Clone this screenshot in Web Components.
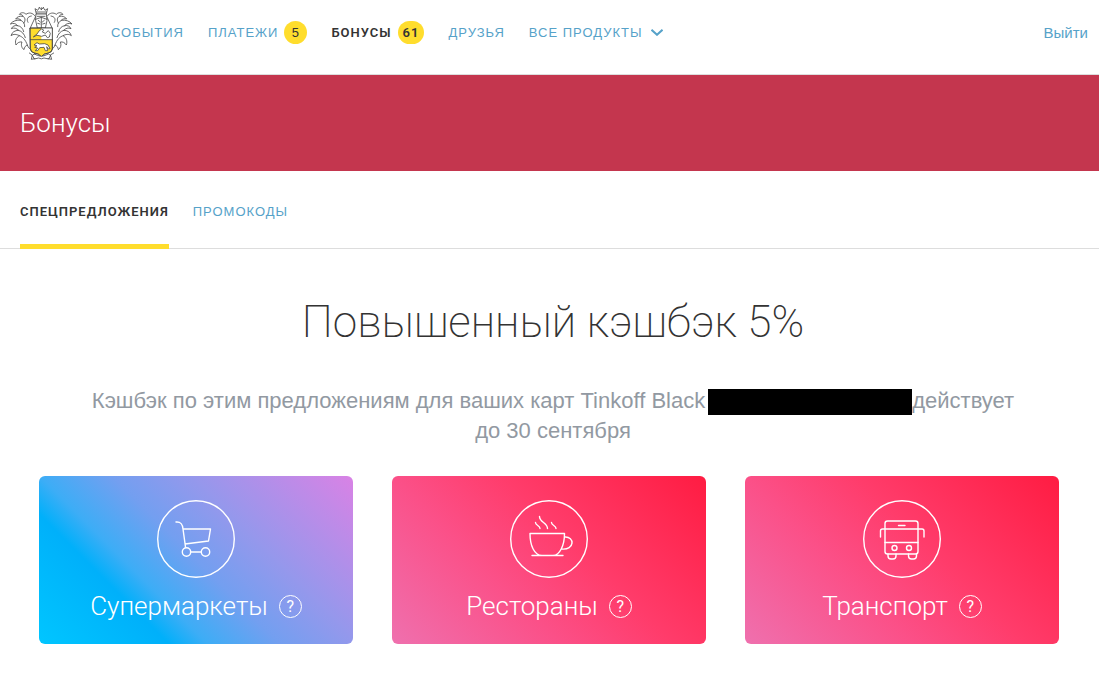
<!DOCTYPE html>
<html lang="ru">
<head>
<meta charset="utf-8">
<meta name="viewport" content="width=device-width, initial-scale=1">
<title>Бонусы</title>
<style>
  body {
    margin: 0;
    background: #fff;
    color: #333;
    font-family: "Liberation Sans", Arial, sans-serif;
    --accent: #ffdd2d;
    --link: #56a2c9;
    --display: Roboto, sans-serif;
    --strong: Roboto, sans-serif;
  }
</style>
</head>
<body>
<bank-header>
  <nav-item label="События"></nav-item>
  <nav-item label="Платежи" count="5"></nav-item>
  <nav-item label="Бонусы" count="61" active></nav-item>
  <nav-item label="Друзья"></nav-item>
  <nav-item label="Все продукты" menu></nav-item>
</bank-header>
<page-banner>Бонусы</page-banner>
<tab-bar>
  <tab-link active>Спецпредложения</tab-link>
  <tab-link>Промокоды</tab-link>
</tab-bar>
<offer-section>
  <span slot="title">Повышенный кэшбэк 5%</span>
  <span>Кэшбэк по этим предложениям для ваших карт Tinkoff Black</span><hidden-text></hidden-text><span>действует</span>
  <offer-date>до 30 сентября</offer-date>
  <offer-card slot="cards" theme="blue" icon="cart">Супермаркеты</offer-card>
  <offer-card slot="cards" icon="cup">Рестораны</offer-card>
  <offer-card slot="cards" icon="bus">Транспорт</offer-card>
</offer-section>

<script>
// Attach an open shadow root and fill it
function render(host, html) {
  host.attachShadow({ mode: 'open' }).innerHTML = html;
}

class CrestLogo extends HTMLElement {
  connectedCallback() {
    render(this, `
      <style>
        :host { display: block; width: 62px; height: 54px; }
        svg { display: block; width: 100%; height: 100%; }
      </style>
      <svg viewBox="30 20 186 162" role="img" aria-label="Герб" fill="#fff" stroke="#444" stroke-width="2.4" stroke-linejoin="round" stroke-linecap="round">
        <g id="leaf">
          <path d="M106 48C98 36 86 36 78 42C72 35 62 36 58 42C64 42 68 44 69 48C60 46 50 50 47 56C54 54 60 56 63 60C50 58 38 62 31 71C40 67 49 70 53 76C45 74 37 78 34 85C42 81 50 84 56 90C45 90 36 95 33 106C41 100 50 102 58 106C48 112 44 122 48 134C53 126 59 124 66 125C62 134 65 143 72 148C73 140 77 136 82 134C84 142 92 149 101 151L98 112L91 84Z"/>
          <path fill="none" d="M94 47C82 49 79 57 84 66M69 48C76 51 77 60 72 68M63 60C70 64 75 70 74 79M53 76C62 77 69 84 71 94M56 90C66 93 73 101 76 112M58 106C67 109 76 117 82 134"/>
        </g>
        <use href="#leaf" transform="translate(247 0) scale(-1 1)"/>
        <path d="M109 40L105 25L113 30L118 22L124 28L130 22L135 30L143 25L139 40Z"/>
        <path fill="none" d="M109 35H139M118 22V20M130 22V20M124 28V22"/>
        <path d="M109 41H139L141 61L136 83H112L107 61Z"/>
        <path fill="none" d="M107 57L124 51L141 57M112 48H135M124 51V82M115 60L121 65M133 60L127 65M113 69L120 71M135 69L128 71"/>
        <path d="M91 83H157V146Q156 156 145 158Q132 159 124 169Q116 159 103 158Q92 156 91 146Z" fill="#ffdd2d"/>
        <path d="M124 83H157V118H124Z" stroke="none"/>
        <path fill="none" d="M91 83H157V146Q156 156 145 158Q132 159 124 169Q116 159 103 158Q92 156 91 146ZM91 118H157"/>
        <path d="M101 109L111 101L118 91L125 86L131 89L127 95L136 99L145 91L151 99L148 110L142 112L136 104L125 108L112 105Z"/>
        <path d="M103 133L111 127L118 131L134 130L144 134L150 145L145 146L140 139L143 151L136 151L132 141L119 142L113 151L106 151L113 143L104 141L110 137Z"/>
        <path d="M103 161L97 165L103 176L116 173Q124 178 132 173L146 176L152 165L145 161Q137 166 124 168Q111 166 103 161Z"/>
        <path fill="none" d="M88 158L97 164L94 177L105 175M161 158L151 164L155 177L144 175"/>
      </svg>
    `);
  }
}

class BankHeader extends HTMLElement {
  connectedCallback() {
    render(this, `
      <style>
        :host { display: block; border-bottom: 1px solid #ddd; }
        header { display: flex; align-items: flex-start; padding: 7px 11px 13px 10px; }
        nav { display: flex; align-items: center; gap: 24px; flex: 1; margin: 13px 0 0 39px; }
        .exit { margin-top: 17px; color: var(--link); font-size: 15px; line-height: 17px; text-decoration: none; }
      </style>
      <header>
        <crest-logo></crest-logo>
        <nav><slot></slot></nav>
        <a class="exit" href="#">Выйти</a>
      </header>
    `);
  }
}

class NavItem extends HTMLElement {
  connectedCallback() {
    const count = this.getAttribute('count');
    render(this, `
      <style>
        :host { display: block; font-size: 13px; line-height: 25px; letter-spacing: 1px; }
        a { display: flex; align-items: center; color: var(--link); text-decoration: none; text-transform: uppercase; }
        :host([active]) a { color: #333; font-family: var(--strong); font-weight: 600; }
        .count {
          box-sizing: border-box;
          min-width: 23px;
          margin-left: 6px;
          padding: 0 5px;
          border-radius: 12px;
          background: var(--accent);
          color: #333;
          line-height: 23px;
          text-align: center;
        }
        svg { width: 12px; height: 7px; margin-left: 8px; }
      </style>
      <a href="#">${this.getAttribute('label')}
        ${count ? `<span class="count">${count}</span>` : ''}
        ${this.hasAttribute('menu') ? `<svg viewBox="0 0 12 7" fill="none" stroke="currentColor" stroke-width="2"><path d="M.5.800l5.500 5 5.500-5"/></svg>` : ''}
      </a>
    `);
  }
}

class PageBanner extends HTMLElement {
  connectedCallback() {
    render(this, `
      <style>
        :host { display: block; padding: 32px 20px; background: #c4364e; color: #fff; }
        h1 { margin: 0; font: 300 26px/32px var(--display); }
      </style>
      <h1><slot></slot></h1>
    `);
  }
}

class TabBar extends HTMLElement {
  connectedCallback() {
    render(this, `
      <style>
        :host { display: block; border-bottom: 1px solid #ddd; }
        nav { display: flex; gap: 24px; padding: 0 20px; margin-bottom: -1px; }
      </style>
      <nav><slot></slot></nav>
    `);
  }
}

class TabLink extends HTMLElement {
  connectedCallback() {
    render(this, `
      <style>
        :host { display: block; }
        a {
          display: block;
          padding: 32px 0 24px;
          border-bottom: 5px solid transparent;
          color: var(--link);
          font-size: 13px;
          line-height: 17px;
          letter-spacing: 1px;
          text-decoration: none;
          text-transform: uppercase;
        }
        :host([active]) a { border-color: var(--accent); color: #333; font-family: var(--strong); font-weight: 600; }
      </style>
      <a href="#"><slot></slot></a>
    `);
  }
}

class OfferSection extends HTMLElement {
  connectedCallback() {
    render(this, `
      <style>
        :host { display: block; padding: 45px 40px 54px 39px; }
        h2 { margin: 0; padding-left: 8px; color: #333; font: 200 44px/56px var(--display); text-align: center; }
        p { margin: 36px 40px 30px 48px; color: #9299a2; font-size: 22px; line-height: 30px; text-align: center; }
        .cards { display: grid; grid-template-columns: repeat(3, 1fr); gap: 39px; }
      </style>
      <h2><slot name="title"></slot></h2>
      <p><slot></slot></p>
      <div class="cards"><slot name="cards"></slot></div>
    `);
  }
}

// Blacked-out card number
class HiddenText extends HTMLElement {
  connectedCallback() {
    render(this, `
      <style>
        :host { display: inline-block; width: 204px; height: 26px; margin-left: 3px; background: #000; vertical-align: middle; }
      </style>
    `);
  }
}

// End date that stays on one line
class OfferDate extends HTMLElement {
  connectedCallback() {
    render(this, `
      <style>
        :host { display: inline-block; white-space: nowrap; }
      </style>
      <slot></slot>
    `);
  }
}

const ICONS = {
  cart: '<path d="M19 22c5-.500 6.500 2 7 7L28.500 47M26.500 29H53.500L51.500 41L28 44M33.500 52H44"/><circle cx="29.500" cy="52" r="4.200"/><circle cx="48.500" cy="52" r="4.200"/>',
  cup: '<path d="M20 33.500H54.500C54.500 45 50 55.500 43 55.500H32C24 55.500 20 45 20 33.500ZM22 55.500H53M54.500 37C65 36 65 50.500 51.500 49M25.500 22.500c0 3 4.500 3 4.500 6M29.500 16.500c0 6 8 6 8 12M41.500 22.500c0 3 4.500 3 4.500 6"/>',
  bus: '<rect x="22" y="21" width="33" height="33" rx="2.500"/><path d="M17.500 37V31Q17.500 29 19.500 29H59Q61 29 61 31V37M22 42.500H55M35.500 25.500H42M25 54v2q0 3 3 3h2q3 0 3-3v-2M45.500 54v2q0 3 3 3h2q3 0 3-3v-2"/><circle cx="31.500" cy="48" r="2.500"/><circle cx="46" cy="48" r="2.500"/>'
};

class OfferCard extends HTMLElement {
  connectedCallback() {
    render(this, `
      <style>
        :host {
          display: flex;
          flex-direction: column;
          align-items: center;
          padding: 24px 12px 21px;
          border-radius: 6px;
          background: linear-gradient(45deg, #ef70ae, #fb5088 35%, #ff3c6b 58%, #ff1c42);
          color: #fff;
        }
        :host([theme="blue"]) { background: linear-gradient(45deg, #00c6ff, #00b0fa 27%, #3dadf6 35%, #739ff0 50%, #9498ec 66%, #d982e5); }
        svg { width: 78px; height: 78px; }
        .row { display: flex; align-items: center; gap: 11px; margin-top: 11px; }
        h3 { margin: 0; font: 300 26px/34px var(--display); }
        button {
          width: 23px;
          height: 23px;
          padding: 0;
          border: 1px solid #fff;
          border-radius: 50%;
          background: none;
          color: inherit;
          font: 400 16px/21px Roboto, sans-serif;
          cursor: pointer;
        }
      </style>
      <svg viewBox="0 0 78 78" fill="none" stroke="#fff" stroke-width="1.400" stroke-linecap="round" stroke-linejoin="round" aria-hidden="true">
        <circle cx="39" cy="39" r="38.300"/>${ICONS[this.getAttribute('icon')]}
      </svg>
      <div class="row">
        <h3><slot></slot></h3>
        <button type="button" aria-label="Подробнее">?</button>
      </div>
    `);
  }
}

customElements.define('crest-logo', CrestLogo);
customElements.define('bank-header', BankHeader);
customElements.define('nav-item', NavItem);
customElements.define('page-banner', PageBanner);
customElements.define('tab-bar', TabBar);
customElements.define('tab-link', TabLink);
customElements.define('offer-section', OfferSection);
customElements.define('hidden-text', HiddenText);
customElements.define('offer-date', OfferDate);
customElements.define('offer-card', OfferCard);
</script>
</body>
</html>
